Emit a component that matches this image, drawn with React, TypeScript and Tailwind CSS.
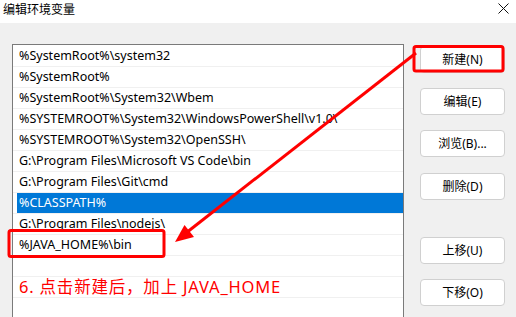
import React from "react";

const rows = [
  "%SystemRoot%\\system32",
  "%SystemRoot%",
  "%SystemRoot%\\System32\\Wbem",
  "%SYSTEMROOT%\\System32\\WindowsPowerShell\\v1.0\\",
  "%SYSTEMROOT%\\System32\\OpenSSH\\",
  "G:\\Program Files\\Microsoft VS Code\\bin",
  "G:\\Program Files\\Git\\cmd",
  "%CLASSPATH%",
  "G:\\Program Files\\nodejs\\",
  "%JAVA_HOME%\\bin",
  "",
  "",
  "",
];

const font = { fontFamily: '"Noto Sans", "Noto Sans CJK SC", sans-serif' };

function Btn({ label, top }: { label: string; top: string }) {
  return (
    <button
      className={`w-[85px] h-[27px] bg-white border border-[#d0d0d0] rounded-[4px] text-[12px] text-black flex items-center justify-center ${top}`}
    >
      {label}
    </button>
  );
}

export default function App() {
  return (
    <div className="relative w-[516px] h-[317px] overflow-hidden bg-[#f0f0f0]" style={font}>
      <div className="h-[23px] bg-white flex items-center justify-between pl-[3px] pr-[7px]">
        <span className="text-[12px] text-black leading-none -mt-[4px]">编辑环境变量</span>
        <svg width="11" height="11" viewBox="0 0 11 11" className="-mt-[6px]">
          <path d="M0.5 0.5L10.5 10.5M10.5 0.5L0.5 10.5" stroke="#111" strokeWidth="1" />
        </svg>
      </div>
      <div className="flex pl-[12px] pt-[21px]">
        <div className="w-[392px] h-[300px] bg-white border border-[#7a7a7a] pt-px">
          {rows.map((r, i) => (
            <div key={i} className="h-[21px] border-b border-[#f0f0f0]">
              <div
                className={`h-[20px] ml-[4px] pl-[2px] flex items-center text-[12.5px] whitespace-nowrap ${
                  i === 7 ? "bg-[#0078d7] text-white" : "text-black"
                }`}
              >
                {i === 11 ? (
                  <span className="text-[16.5px] tracking-[0.8px] text-[#ff0000] leading-none">6. 点击新建后，加上 JAVA_HOME</span>
                ) : (
                  r
                )}
              </div>
            </div>
          ))}
        </div>
        <div className="flex flex-col ml-[16px] pt-[2px]">
          <Btn label="新建(N)" top="" />
          <Btn label="编辑(E)" top="mt-[15px]" />
          <Btn label="浏览(B)..." top="mt-[15px]" />
          <Btn label="删除(D)" top="mt-[16px]" />
          <Btn label="上移(U)" top="mt-[37px]" />
          <Btn label="下移(O)" top="mt-[15px]" />
        </div>
      </div>
      <svg className="absolute left-0 top-0 pointer-events-none" width="516" height="317" viewBox="0 0 516 317">
        <rect x="414" y="46.5" width="89" height="24.5" rx="2" fill="none" stroke="#ff0000" strokeWidth="3" />
        <rect x="9" y="230.5" width="155" height="26" rx="2" fill="none" stroke="#ff0000" strokeWidth="3" />
        <line x1="416" y1="53" x2="186" y2="233" stroke="#ff0000" strokeWidth="3" />
        <polygon points="175,242 184.5,225 194,237" fill="#ff0000" />
      </svg>
    </div>
  );
}
